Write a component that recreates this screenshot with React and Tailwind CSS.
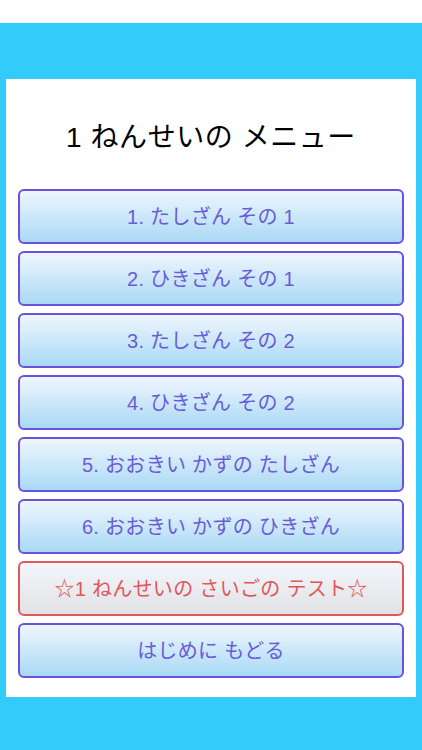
import React from "react";

const ITEMS = [
  "1. たしざん その 1",
  "2. ひきざん その 1",
  "3. たしざん その 2",
  "4. ひきざん その 2",
  "5. おおきい かずの たしざん",
  "6. おおきい かずの ひきざん",
];

const font = { fontFamily: '"Liberation Sans", "Noto Sans CJK JP", sans-serif' };

const MenuButton = ({ label, test }) => (
  <button
    className={
      test
        ? "h-[55px] w-full rounded-[6px] border-2 border-[#e0575a] bg-gradient-to-b from-[#f2f6fb] to-[#e2e2e4] text-[20px] tracking-[0.015em] text-[#e0575a]"
        : "h-[55px] w-full rounded-[6px] border-2 border-[#6b52dc] bg-gradient-to-b from-[#eef6fd] to-[#a9d9f5] text-[20px] tracking-[0.015em] text-[#6a5bd8]"
    }
    style={font}
  >
    {label}
  </button>
);

export default function App() {
  return (
    <div className="flex h-[750px] w-[422px] flex-col bg-white" style={font}>
      <div className="h-[23px] bg-white" />
      <div className="flex flex-1 flex-col bg-[#33ccfa] px-[6px] pt-[56px] pb-[53px]">
        <div className="flex flex-1 flex-col bg-white px-[12px]">
          <h1 className="mt-[40px] mb-[32px] text-center text-[28px] leading-[38px] tracking-[0.02em] text-black">
            1 ねんせいの メニュー
          </h1>
          <div className="flex flex-col gap-[7px]">
            {ITEMS.map((item) => (
              <MenuButton key={item} label={item} />
            ))}
            <MenuButton label="☆1 ねんせいの さいごの テスト☆" test />
            <MenuButton label="はじめに もどる" />
          </div>
        </div>
      </div>
    </div>
  );
}
